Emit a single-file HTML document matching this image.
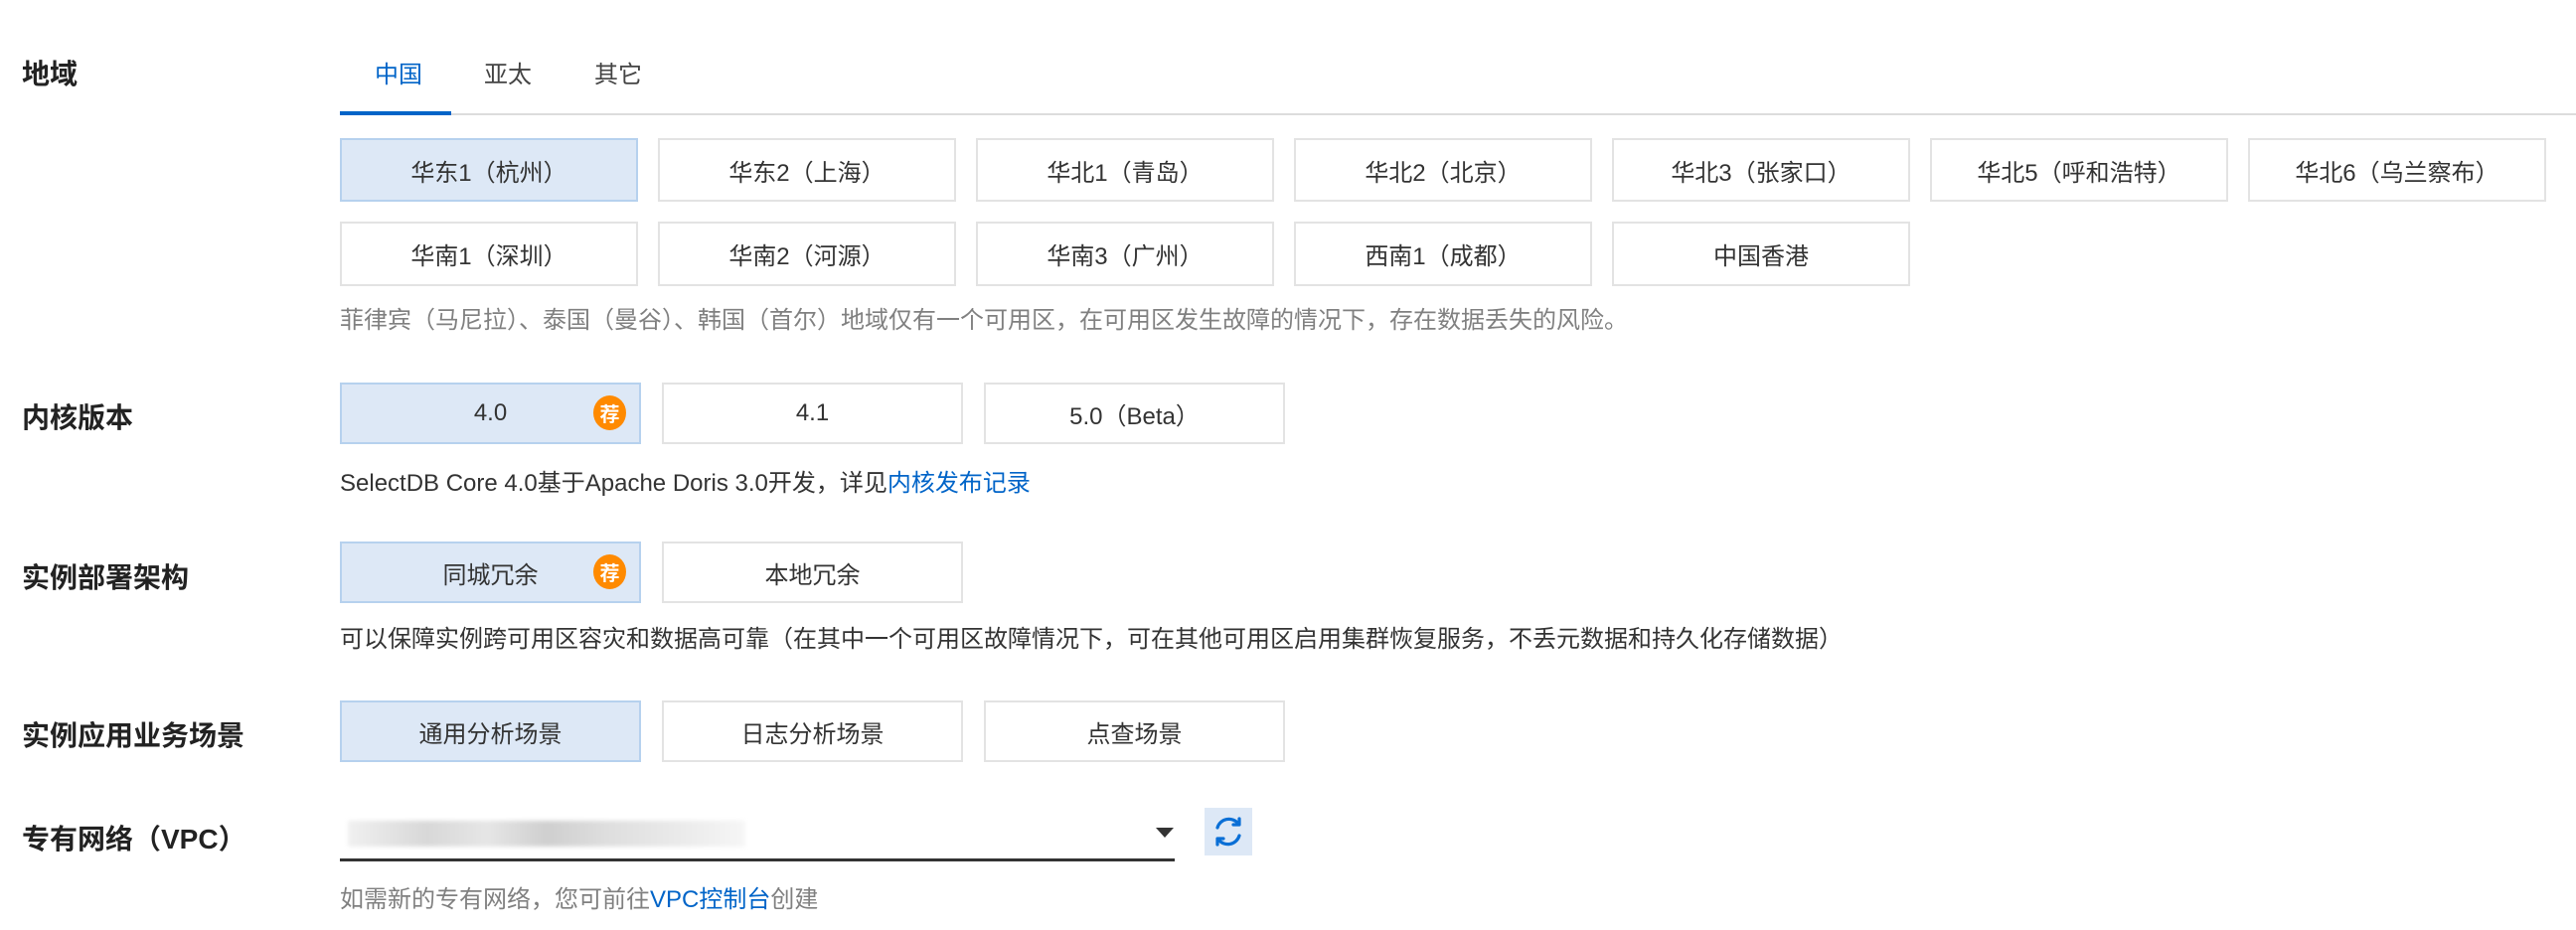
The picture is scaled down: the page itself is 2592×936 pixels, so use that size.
<!DOCTYPE html>
<html><head><meta charset="utf-8"><style>
*{margin:0;padding:0;box-sizing:border-box}
body{width:2592px;height:936px;background:#fff;position:relative;overflow:hidden;font-family:"Liberation Sans","Noto Sans CJK SC",sans-serif;color:#333}
.a{position:absolute}
.lab{position:absolute;left:22px;font-size:28px;font-weight:bold;color:#222;line-height:40px;transform:translateY(-50%)}
.b{position:absolute;border:2px solid #e3e3e3;background:#fff;font-size:24px;display:flex;align-items:center;justify-content:center;color:#333}
.s{background:#dde8f6;border-color:#b6d1ee}
.t{position:absolute;font-size:24px;line-height:34px;transform:translateY(-50%);color:#333;white-space:nowrap}
.g{color:#808080}
.bl{color:#0064c8}
.badge{position:absolute;width:33px;height:35px;border-radius:50%;background:#ff8a00;color:#fff;font-size:20px;font-weight:bold;display:flex;align-items:center;justify-content:center}
</style></head><body>
<div class="lab" style="top:75px">地域</div>
<div class="t bl" style="left:377px;top:76px">中国</div>
<div class="t" style="left:487px;top:76px;color:#444">亚太</div>
<div class="t" style="left:598px;top:76px;color:#444">其它</div>
<div class="a" style="left:342px;top:114px;width:2250px;height:2px;background:#dcdcdc"></div>
<div class="a" style="left:342px;top:112px;width:112px;height:4px;background:#0064c8"></div>

<div class="b s" style="left:342px;top:139px;width:300px;height:64px">华东1（杭州）</div>
<div class="b" style="left:662px;top:139px;width:300px;height:64px">华东2（上海）</div>
<div class="b" style="left:982px;top:139px;width:300px;height:64px">华北1（青岛）</div>
<div class="b" style="left:1302px;top:139px;width:300px;height:64px">华北2（北京）</div>
<div class="b" style="left:1622px;top:139px;width:300px;height:64px">华北3（张家口）</div>
<div class="b" style="left:1942px;top:139px;width:300px;height:64px">华北5（呼和浩特）</div>
<div class="b" style="left:2262px;top:139px;width:300px;height:64px">华北6（乌兰察布）</div>
<div class="b" style="left:342px;top:223px;width:300px;height:65px">华南1（深圳）</div>
<div class="b" style="left:662px;top:223px;width:300px;height:65px">华南2（河源）</div>
<div class="b" style="left:982px;top:223px;width:300px;height:65px">华南3（广州）</div>
<div class="b" style="left:1302px;top:223px;width:300px;height:65px">西南1（成都）</div>
<div class="b" style="left:1622px;top:223px;width:300px;height:65px">中国香港</div>
<div class="t g" style="left:342px;top:323px">菲律宾（马尼拉）、泰国（曼谷）、韩国（首尔）地域仅有一个可用区，在可用区发生故障的情况下，存在数据丢失的风险。</div>

<div class="lab" style="top:421px">内核版本</div>
<div class="b s" style="left:342px;top:385px;width:303px;height:62px">4.0</div>
<div class="badge" style="left:597px;top:398px">荐</div>
<div class="b" style="left:666px;top:385px;width:303px;height:62px">4.1</div>
<div class="b" style="left:990px;top:385px;width:303px;height:62px">5.0（Beta）</div>
<div class="t" style="left:342px;top:487px">SelectDB Core 4.0基于Apache Doris 3.0开发，详见<span class="bl">内核发布记录</span></div>

<div class="lab" style="top:582px">实例部署架构</div>
<div class="b s" style="left:342px;top:545px;width:303px;height:62px">同城冗余</div>
<div class="badge" style="left:597px;top:558px">荐</div>
<div class="b" style="left:666px;top:545px;width:303px;height:62px">本地冗余</div>
<div class="t" style="left:342px;top:644px">可以保障实例跨可用区容灾和数据高可靠（在其中一个可用区故障情况下，可在其他可用区启用集群恢复服务，不丢元数据和持久化存储数据）</div>

<div class="lab" style="top:741px">实例应用业务场景</div>
<div class="b s" style="left:342px;top:705px;width:303px;height:62px">通用分析场景</div>
<div class="b" style="left:666px;top:705px;width:303px;height:62px">日志分析场景</div>
<div class="b" style="left:990px;top:705px;width:303px;height:62px">点查场景</div>

<div class="lab" style="top:845px">专有网络（VPC）</div>
<div class="a" style="left:350px;top:826px;width:400px;height:26px;background:linear-gradient(90deg,#f0f0f0,#d8d8d8 20%,#e6e6e6 35%,#cfcfcf 50%,#dedede 65%,#e8e8e8 80%,#f6f6f6);filter:blur(2px)"></div>
<div class="a" style="left:342px;top:864px;width:840px;height:3px;background:#333"></div>
<div class="a" style="left:1163px;top:833px;width:0;height:0;border-left:9px solid transparent;border-right:9px solid transparent;border-top:10px solid #333"></div>
<div class="a" style="left:1212px;top:813px;width:48px;height:48px;background:#dde8f6">
<svg width="48" height="48" viewBox="0 0 48 48" fill="none" stroke="#0a6fd6" stroke-width="3.2" stroke-linecap="round"><path d="M13 20a12 12 0 0 1 21-4"/><path d="M35 11v6h-6" stroke-linejoin="round"/><path d="M35 28a12 12 0 0 1-21 4"/><path d="M13 37v-6h6" stroke-linejoin="round"/></svg>
</div>
<div class="t g" style="left:342px;top:906px">如需新的专有网络，您可前往<span class="bl">VPC控制台</span>创建</div>
</body></html>
